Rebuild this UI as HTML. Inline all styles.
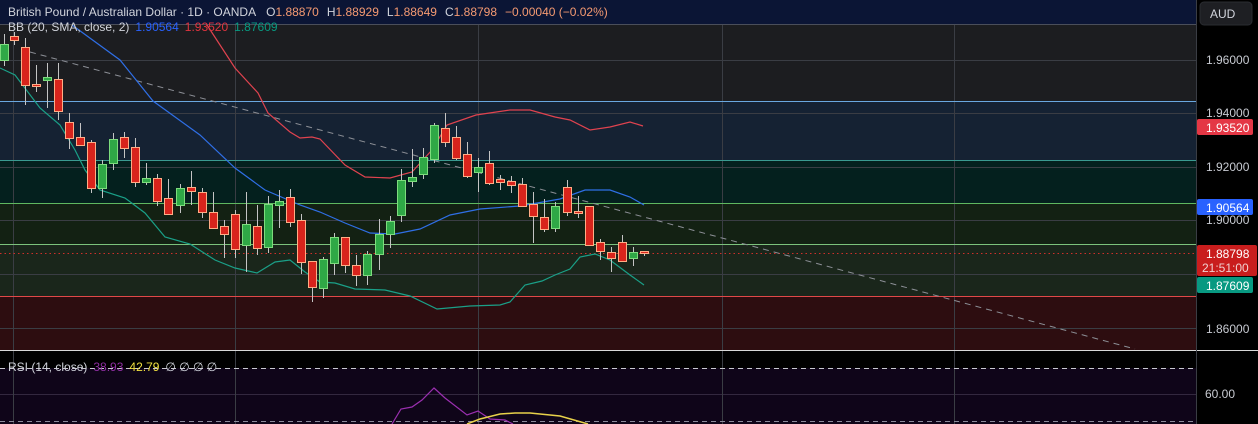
<!DOCTYPE html>
<html><head><meta charset="utf-8"><style>
html,body{margin:0;padding:0;background:#000;width:1258px;height:424px;overflow:hidden;font-family:"Liberation Sans",sans-serif}
svg{position:absolute;left:0;top:0}
.t{font-size:12px}
</style></head><body>
<svg width="1258" height="424" xmlns="http://www.w3.org/2000/svg" id="s">
<rect x="0" y="0" width="1196" height="24" fill="#0b1535"/>
<rect x="0" y="24" width="1196" height="77" fill="#1c1d20"/>
<rect x="0" y="101" width="1196" height="59" fill="#152233"/>
<rect x="0" y="160" width="1196" height="43" fill="#04201e"/>
<rect x="0" y="203" width="1196" height="41" fill="#132113"/>
<rect x="0" y="244" width="1196" height="52" fill="#1a261b"/>
<rect x="0" y="296" width="1196" height="54" fill="#2d0d10"/>
<rect x="0" y="351" width="1196" height="17" fill="#000"/>
<rect x="0" y="368" width="1196" height="56" fill="#0f0519"/>
<g stroke="#3a3d44" stroke-width="1">
<line x1="0" y1="60.5" x2="1196" y2="60.5"/><line x1="0" y1="113.5" x2="1196" y2="113.5"/>
<line x1="0" y1="167.5" x2="1196" y2="167.5"/><line x1="0" y1="220.5" x2="1196" y2="220.5"/>
<line x1="0" y1="274.5" x2="1196" y2="274.5"/><line x1="0" y1="328.5" x2="1196" y2="328.5"/>
<line x1="0" y1="394.5" x2="1196" y2="394.5" stroke="#33283f"/>
<line x1="13.5" y1="24" x2="13.5" y2="424"/><line x1="235.5" y1="24" x2="235.5" y2="424"/>
<line x1="478.5" y1="24" x2="478.5" y2="424"/><line x1="722.5" y1="24" x2="722.5" y2="424"/>
<line x1="954.5" y1="24" x2="954.5" y2="424"/>
</g>
<line x1="0" y1="24.5" x2="1196" y2="24.5" stroke="#4a4e5a"/>
<line x1="0" y1="101.5" x2="1196" y2="101.5" stroke="#6aa8e0"/>
<line x1="0" y1="160.5" x2="1196" y2="160.5" stroke="#3a9a90"/>
<line x1="0" y1="203.5" x2="1196" y2="203.5" stroke="#5fb860"/>
<line x1="0" y1="244.5" x2="1196" y2="244.5" stroke="#7cc27c"/>
<line x1="0" y1="296.5" x2="1196" y2="296.5" stroke="#e04848"/>
<line x1="0" y1="253.5" x2="1196" y2="253.5" stroke="#d0302a" stroke-dasharray="1.5 3"/>
<line x1="0" y1="350.5" x2="1258" y2="350.5" stroke="#d8d8d8"/>
<line x1="1196.5" y1="0" x2="1196.5" y2="424" stroke="#3a3d44"/>
<line x1="0" y1="368.5" x2="1196" y2="368.5" stroke="#c8c8d0" stroke-dasharray="5 4"/>
<line x1="0" y1="421.5" x2="1196" y2="421.5" stroke="#8a8a9a" stroke-dasharray="5 4"/>
<line x1="30" y1="52" x2="1135" y2="349" stroke="#8c8f96" stroke-dasharray="6 5"/>
<polyline fill="none" stroke="#e0434f" stroke-width="1.2" points="207,25 235,68 258,93 268,113 290,132 300,138 312,137 320,139 345,165 365,177 390,178 412,172 432,150 447,125 476,115 510,110 530,110 555,117 570,120 590,130 610,127 630,122 643,126"/>
<polyline fill="none" stroke="#2f6fe6" stroke-width="1.2" points="72,25 120,60 153,101 200,135 235,168 265,190 300,205 320,212 345,223 370,233 395,234 420,229 450,215 480,209 520,206 560,199 585,190 610,190 630,197 644,205"/>
<polyline fill="none" stroke="#1aa088" stroke-width="1.2" points="0,68 15,75 40,108 60,125 75,150 85,170 100,190 125,198 145,213 165,237 190,244 215,260 235,268 257,273 275,262 290,260 305,272 320,282 335,283 355,289 385,290 410,296 437,309 470,306 500,305 510,302 525,285 542,281 555,275 570,269 580,257 595,254 610,260 630,275 644,285"/>
<polyline fill="none" stroke="#9b2fb0" stroke-width="1.2" points="392,424 401,409 412,407 422,400 434,388 445,398 467,415 478,411 490,419 505,420 513,424"/>
<polyline fill="none" stroke="#e8d24a" stroke-width="1.5" points="467,424 480,419 500,414 515,413 530,413 560,416 588,424"/>
<g id="c"></g>
<text x="8" y="16" class="t" fill="#d1d4dc">British Pound / Australian Dollar · 1D · OANDA<tspan dx="10">O</tspan><tspan fill="#f59a72">1.88870</tspan><tspan dx="8">H</tspan><tspan fill="#f59a72">1.88929</tspan><tspan dx="8">L</tspan><tspan fill="#f59a72">1.88649</tspan><tspan dx="8">C</tspan><tspan fill="#f59a72">1.88798</tspan><tspan fill="#f59a72" dx="8">−0.00040 (−0.02%)</tspan></text>
<text x="8" y="31" class="t" fill="#d1d4dc">BB (20, SMA, close, 2)<tspan fill="#2962ff" dx="6">1.90564</tspan><tspan fill="#e0343f" dx="6">1.93520</tspan><tspan fill="#089981" dx="6">1.87609</tspan></text>
<text x="8" y="371" class="t" fill="#d1d4dc">RSI (14, close)<tspan fill="#8d2ea0" dx="6">38.93</tspan><tspan fill="#f0e040" dx="6">42.79</tspan><tspan fill="#d1d4dc" dx="6">∅ ∅ ∅ ∅</tspan></text>
<rect x="1200" y="2" width="52" height="23" rx="4" fill="#1e1f23" stroke="#2a2c31"/>
<text x="1210" y="18" class="t" fill="#d1d4dc">AUD</text>
<g class="t" fill="#c8cbd2">
<text x="1206" y="64">1.96000</text><text x="1206" y="117">1.94000</text>
<text x="1206" y="171">1.92000</text><text x="1206" y="224">1.90000</text>
<text x="1206" y="333">1.86000</text><text x="1205" y="398">60.00</text>
</g>
<rect x="1197" y="119" width="56" height="16" rx="2" fill="#e43745"/>
<text x="1206" y="132" class="t" fill="#fff">1.93520</text>
<rect x="1197" y="199" width="56" height="16" rx="2" fill="#2962ff"/>
<text x="1206" y="212" class="t" fill="#fff">1.90564</text>
<rect x="1197" y="245" width="60" height="31" rx="2" fill="#c91d1d"/>
<text x="1206" y="258" class="t" fill="#fff">1.88798</text>
<text x="1202" y="272" class="t" fill="#f0d0d0">21:51:00</text>
<rect x="1197" y="277" width="56" height="16" rx="2" fill="#089981"/>
<text x="1206" y="290" class="t" fill="#fff">1.87609</text>
</svg>
<script>
var d=[[4,'g',44,60,34,66],[14,'r',36,40,32,45],[25,'r',47,85,38,105],[36,'d',84,84,65,92],[47,'g',77,80,63,108],[58,'r',79,111,63,120],[69,'r',122,138,113,149],[80,'r',137,145,123,145],[91,'r',142,188,140,193],[102,'g',164,188,160,198],[113,'g',139,163,133,170],[124,'r',137,148,132,158],[135,'r',147,182,138,187],[146,'g',178,182,163,185],[157,'r',178,201,174,206],[168,'r',198,214,179,214],[180,'g',188,205,184,213],[191,'r',187,191,171,205],[202,'r',192,212,188,218],[213,'r',212,228,192,229],[224,'r',226,234,220,258],[235,'r',214,249,210,258],[246,'g',224,245,192,272],[257,'r',226,248,205,255],[268,'g',204,247,196,253],[279,'g',201,205,190,228],[290,'r',197,222,189,227],[301,'r',220,262,214,274],[312,'r',261,287,261,302],[323,'g',259,288,257,298],[334,'g',237,263,233,275],[345,'r',237,265,237,273],[356,'r',265,275,255,286],[367,'g',254,275,251,285],[379,'g',234,254,219,270],[390,'g',221,234,216,248],[401,'g',180,215,169,222],[412,'g',177,181,149,187],[423,'g',157,174,148,179],[434,'g',125,159,123,163],[445,'r',128,142,113,147],[456,'r',137,158,126,160],[467,'r',154,176,142,178],[478,'g',167,172,158,192],[489,'r',163,183,151,185],[500,'r',179,182,175,190],[511,'r',181,185,176,193],[522,'r',184,206,178,207],[533,'r',204,216,192,243],[544,'r',217,229,199,232],[555,'g',206,228,202,232],[567,'r',187,212,180,216],[578,'d',211,211,196,218],[589,'r',206,245,206,245],[600,'r',242,251,239,260],[611,'r',252,258,247,272],[622,'r',242,261,235,262],[633,'g',252,258,247,266],[644,'r',251,253,251,256]];
var h='';d.forEach(function(c){var x=c[0];h+='<line x1="'+(x+.5)+'" y1="'+c[4]+'" x2="'+(x+.5)+'" y2="'+c[5]+'" stroke="#c4c4c4"/>';
var f=c[1]=='g'?'#2fa846':'#d8241c',s=c[1]=='g'?'#7ddc7d':'#ffad86';if(c[1]=='d'){f='#d8241c';}
var hh=Math.max(c[3]-c[2],2);h+='<rect x="'+(x-3.5)+'" y="'+(c[2]+.5)+'" width="8" height="'+hh+'" fill="'+f+'" stroke="'+s+'"/>';});
document.getElementById('c').innerHTML=h;
</script>
</body></html>
